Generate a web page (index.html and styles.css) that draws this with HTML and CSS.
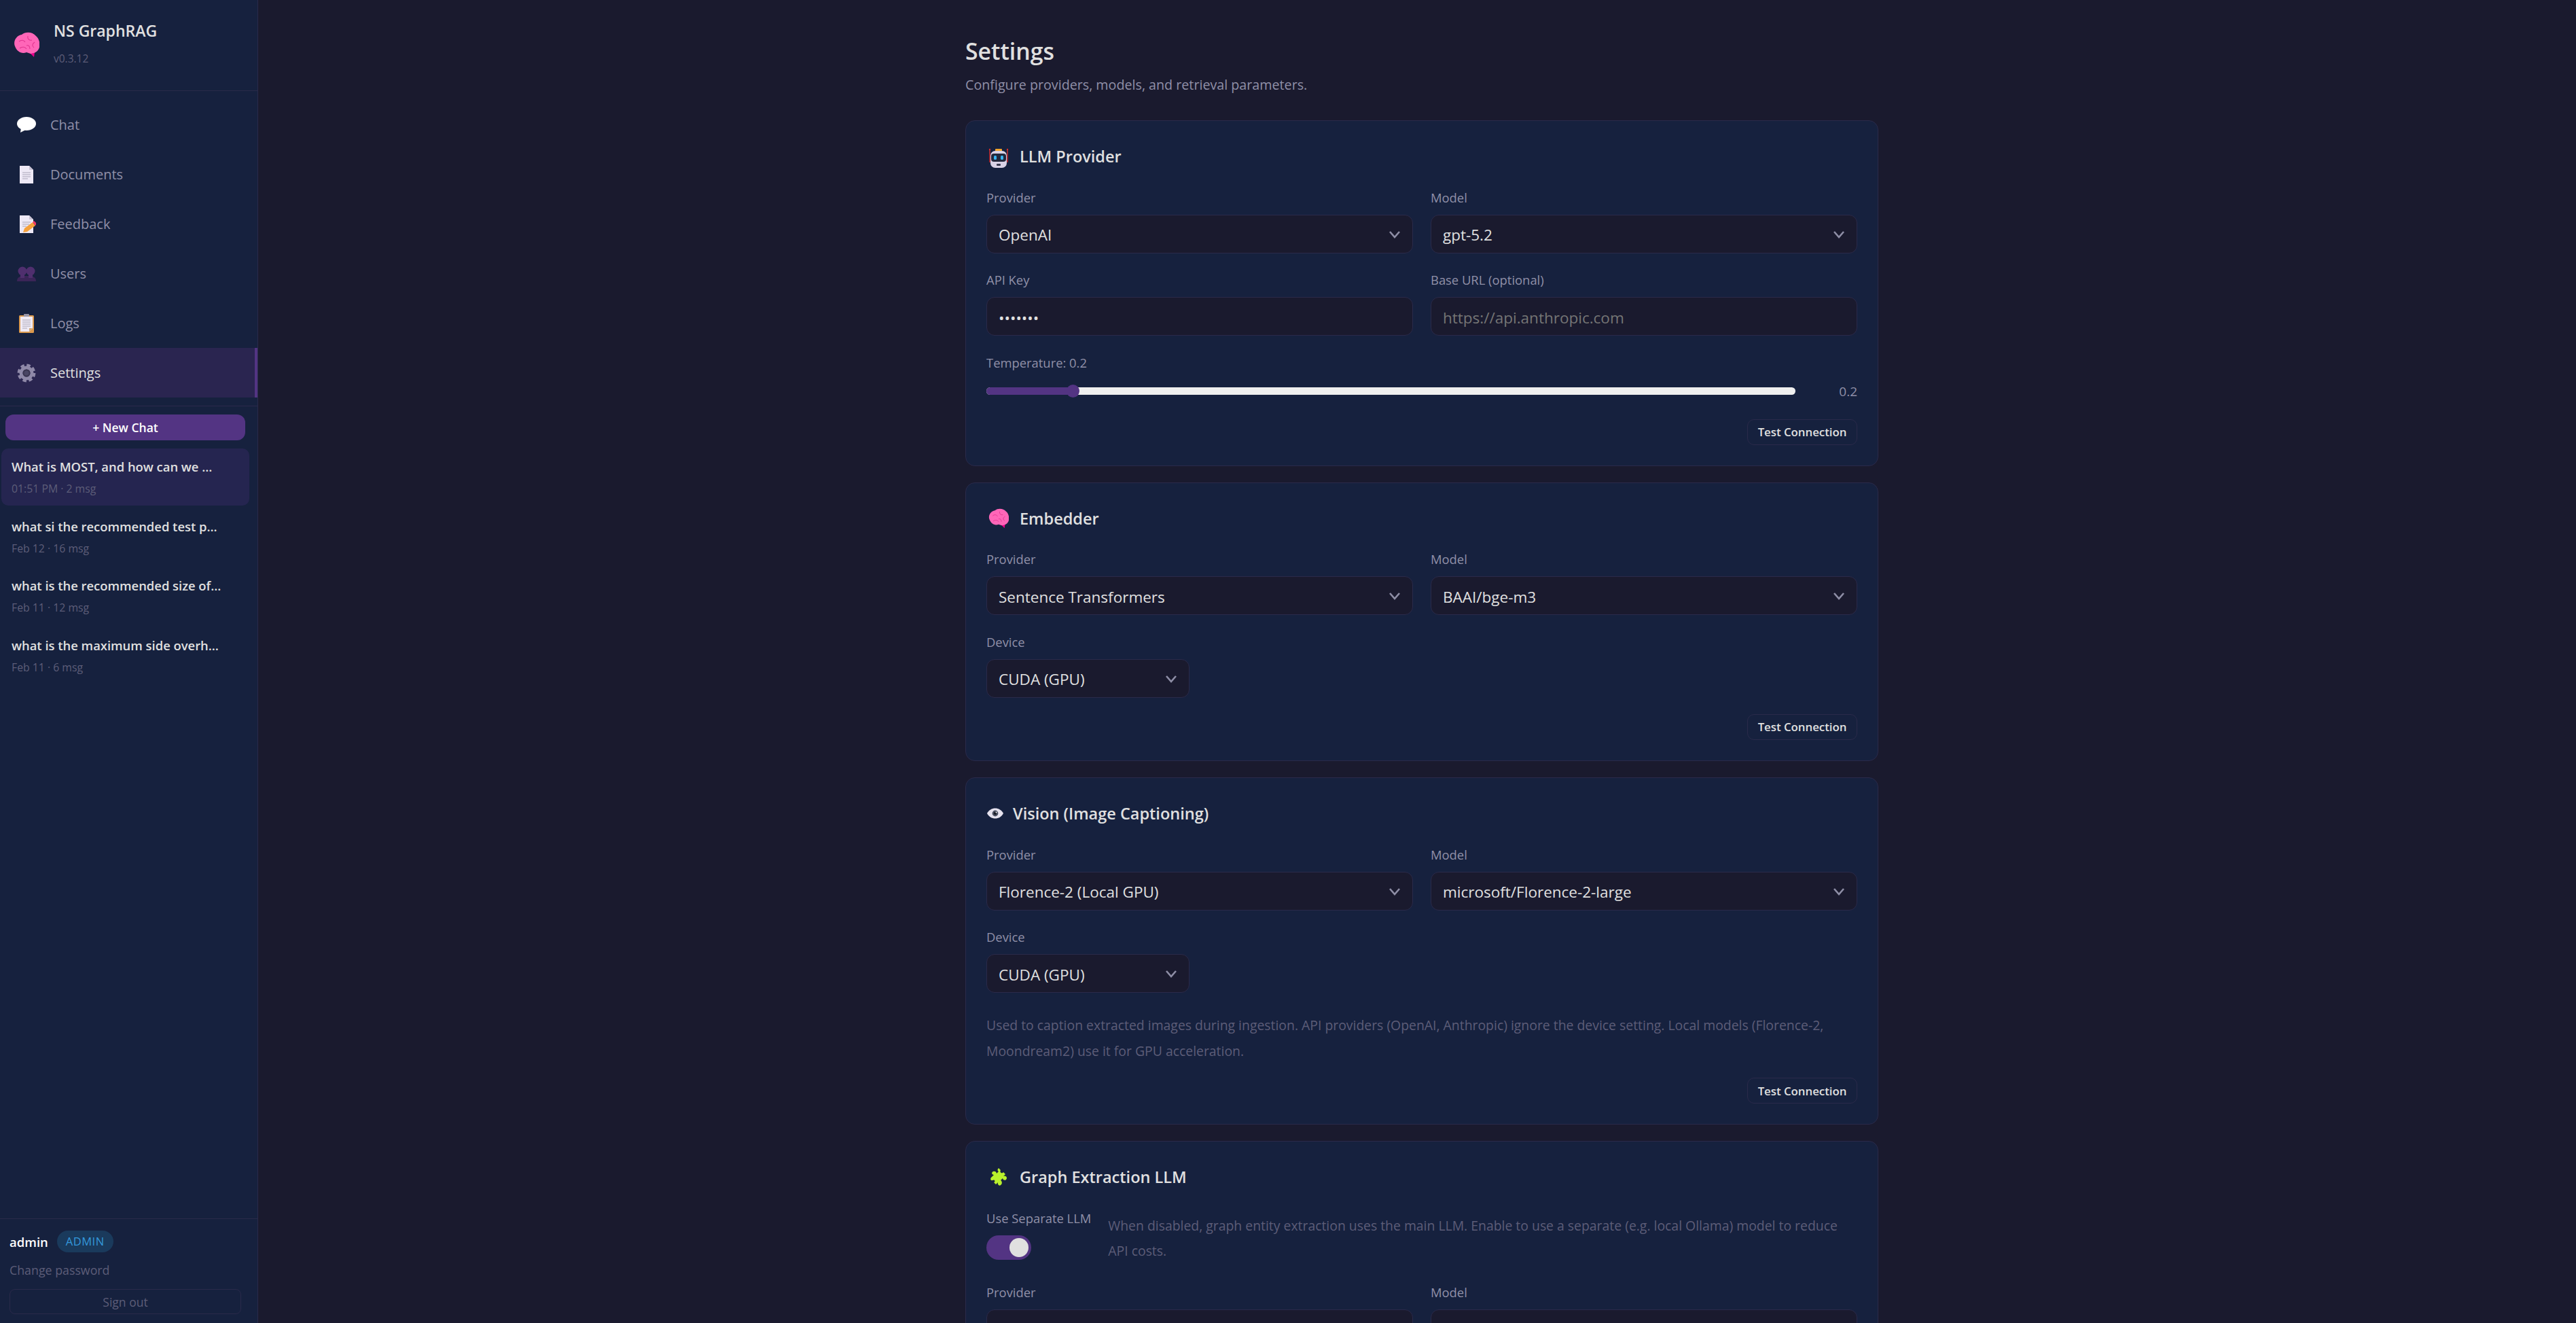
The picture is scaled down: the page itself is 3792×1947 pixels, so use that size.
FILE: index.html
```html
<!DOCTYPE html>
<html lang="en">

<head>
  <meta charset="UTF-8" />
  <meta name="viewport" content="width=device-width, initial-scale=1.0" />
  <title>NS GraphRAG - Settings</title>
  <link rel="stylesheet" href="styles.css">
</head>

<body>
  <svg class="defs" width="0" height="0">
    <symbol id="brain" viewBox="0 0 38 38">
      <path d="M23 30 L31 30 L30 37z" fill="#e8008a" />
      <path d="M2 21 C-1 14 4 5 12 4 C18 -1 28 0 33 6 C38 10 40 19 37 25 C34 31 29 31 25 32 L19 30 C12 33 5 29 2 21z" fill="#ff66b8" />
      <path d="M8 14 C12 11 15 12 17 15 M21 6 C20 10 23 13 27 12 M31 15 C27 18 27 21 30 23 M9 24 C13 21 17 22 19 25 M19 20 C22 19 24 21 24 25" fill="none" stroke="#e0348f" stroke-width="1.1" />
    </symbol>
  </svg>

  <div class="app">
    <aside class="sidebar">
      <div class="brand">
        <svg class="brand-logo"><use href="#brain" /></svg>
        <div>
          <div class="brand-name">NS GraphRAG</div>
          <div class="brand-version">v0.3.12</div>
        </div>
      </div>

      <nav class="nav">
        <a class="nav-item">
          <svg class="nav-icon" viewBox="0 0 28 28">
            <ellipse cx="14" cy="12" rx="14" ry="10" fill="#fff" />
            <path d="M6 18 L5 25 L13 21z" fill="#fff" />
          </svg>
          Chat
        </a>
        <a class="nav-item">
          <svg class="nav-icon" viewBox="0 0 28 28">
            <path d="M4 1 H18 L24 7 V27 H4z" fill="#eee9f6" />
            <path d="M18 1 L24 7 H18z" fill="#c9c4d6" />
            <path d="M8 11 H20 M8 14 H20 M8 17 H20 M8 20 H16" stroke="#a9a5b8" stroke-width="1.2" />
          </svg>
          Documents
        </a>
        <a class="nav-item">
          <svg class="nav-icon" viewBox="0 0 28 28">
            <path d="M4 1 H18 L24 7 V27 H4z" fill="#eee9f6" />
            <path d="M18 1 L24 7 H18z" fill="#c9c4d6" />
            <path d="M8 11 H20 M8 14 H18 M8 17 H14" stroke="#a9a5b8" stroke-width="1.2" />
            <path d="M9 26 L11 20 L23 11 L27 16 L15 25z" fill="#f6a13c" />
            <path d="M23 11 L25 9 L29 13 L27 16z" fill="#f03a68" />
          </svg>
          Feedback
        </a>
        <a class="nav-item">
          <svg class="nav-icon" viewBox="0 0 28 28">
            <path d="M0 25 C0 18 5 17 14 17 C23 17 28 18 28 25z" fill="#3b2558" />
            <circle cx="8" cy="10" r="6.5" fill="#4f2f6e" />
            <circle cx="20" cy="10" r="6.5" fill="#4f2f6e" />
            <path d="M5 15 H11 V20 H5z M17 15 H23 V20 H17z" fill="#4f2f6e" />
          </svg>
          Users
        </a>
        <a class="nav-item">
          <svg class="nav-icon" viewBox="0 0 28 28">
            <rect x="3" y="2" width="22" height="26" rx="1.5" fill="#dc9a4e" />
            <path d="M5 4 H23 V21 L18 26 H5z" fill="#efeaf5" />
            <path d="M18 26 V21 H23z" fill="#cfa878" />
            <rect x="10" y="0" width="8" height="4" rx="1" fill="#9a96a6" />
            <path d="M8 9 H20 M8 12 H20 M8 15 H20 M8 18 H20 M8 21 H15" stroke="#a9a5b8" stroke-width="1.2" />
          </svg>
          Logs
        </a>
        <a class="nav-item active">
          <svg class="nav-icon" viewBox="0 0 28 28">
            <circle cx="14" cy="14" r="11.4" fill="none" stroke="#8f89a8" stroke-width="4" stroke-dasharray="5.4 3.55" />
            <circle cx="14" cy="14" r="8" fill="none" stroke="#8f89a8" stroke-width="5" />
            <circle cx="14" cy="14" r="5.5" fill="#3a3550" />
            <circle cx="14" cy="14" r="3.6" fill="#4a4664" />
          </svg>
          Settings
        </a>
      </nav>

      <div class="chats">
        <button class="new-chat">+ New Chat</button>
        <ul class="chat-list">
          <li class="chat-item active">
            <div class="chat-title">What is MOST, and how can we ...</div>
            <div class="chat-meta">01:51 PM · 2 msg</div>
          </li>
          <li class="chat-item">
            <div class="chat-title">what si the recommended test p...</div>
            <div class="chat-meta">Feb 12 · 16 msg</div>
          </li>
          <li class="chat-item">
            <div class="chat-title">what is the recommended size of...</div>
            <div class="chat-meta">Feb 11 · 12 msg</div>
          </li>
          <li class="chat-item">
            <div class="chat-title">what is the maximum side overh...</div>
            <div class="chat-meta">Feb 11 · 6 msg</div>
          </li>
        </ul>
      </div>

      <div class="account">
        <div class="account-user">
          <span class="account-name">admin</span>
          <span class="badge">ADMIN</span>
        </div>
        <a class="change-password">Change password</a>
        <button class="sign-out">Sign out</button>
      </div>
    </aside>

    <main class="main">
      <div class="page">
        <h1 class="page-title">Settings</h1>
        <p class="page-sub">Configure providers, models, and retrieval parameters.</p>

        <section class="card">
          <h2 class="card-title">
            <svg class="card-icon" viewBox="0 0 36 36">
              <path d="M5 9 V27 M31 9 V27" stroke="#d8302f" stroke-width="1.4" />
              <circle cx="5" cy="8" r="1.2" fill="#d8302f" />
              <circle cx="31" cy="8" r="1.2" fill="#d8302f" />
              <rect x="13" y="7" width="10" height="5" rx="1" fill="#f2a52e" />
              <rect x="6" y="10" width="24" height="25" rx="7" fill="#d9d2e6" />
              <rect x="7" y="14" width="22" height="12" rx="4" fill="#23283c" />
              <rect x="11" y="17" width="4" height="6" rx="1.5" fill="#3ab4f2" />
              <rect x="21" y="17" width="4" height="6" rx="1.5" fill="#3ab4f2" />
              <rect x="15" y="29" width="6" height="3" rx="1" fill="#3a3a50" />
            </svg>
            LLM Provider
          </h2>
          <div class="form-grid">
            <div class="field">
              <label class="field-label">Provider</label>
              <div class="select-wrap">
                <select class="control"><option>OpenAI</option></select>
                <svg class="chevron" viewBox="0 0 18 12"><path d="M2 2 L9 10 L16 2" /></svg>
              </div>
            </div>
            <div class="field">
              <label class="field-label">Model</label>
              <div class="select-wrap">
                <select class="control"><option>gpt-5.2</option></select>
                <svg class="chevron" viewBox="0 0 18 12"><path d="M2 2 L9 10 L16 2" /></svg>
              </div>
            </div>
            <div class="field">
              <label class="field-label">API Key</label>
              <input class="control" type="password" value="sk-test" />
            </div>
            <div class="field">
              <label class="field-label">Base URL (optional)</label>
              <input class="control" type="text" placeholder="https://api.anthropic.com" />
            </div>
          </div>
          <div class="field">
            <label class="field-label">Temperature: 0.2</label>
            <div class="slider-row">
              <div class="slider">
                <div class="slider-fill" style="width: 127px"></div>
                <div class="slider-thumb" style="left: 127px"></div>
              </div>
              <span class="slider-value">0.2</span>
            </div>
          </div>
          <div class="actions"><button class="test-btn">Test Connection</button></div>
        </section>

        <section class="card">
          <h2 class="card-title">
            <svg class="card-icon brain"><use href="#brain" /></svg>
            Embedder
          </h2>
          <div class="form-grid">
            <div class="field">
              <label class="field-label">Provider</label>
              <div class="select-wrap">
                <select class="control"><option>Sentence Transformers</option></select>
                <svg class="chevron" viewBox="0 0 18 12"><path d="M2 2 L9 10 L16 2" /></svg>
              </div>
            </div>
            <div class="field">
              <label class="field-label">Model</label>
              <div class="select-wrap">
                <select class="control"><option>BAAI/bge-m3</option></select>
                <svg class="chevron" viewBox="0 0 18 12"><path d="M2 2 L9 10 L16 2" /></svg>
              </div>
            </div>
          </div>
          <div class="field device">
            <label class="field-label">Device</label>
            <div class="select-wrap">
              <select class="control"><option>CUDA (GPU)</option></select>
              <svg class="chevron" viewBox="0 0 18 12"><path d="M2 2 L9 10 L16 2" /></svg>
            </div>
          </div>
          <div class="actions"><button class="test-btn">Test Connection</button></div>
        </section>

        <section class="card">
          <h2 class="card-title">
            <svg class="card-icon eye" viewBox="0 0 26 36">
              <path d="M1 18 C6 8 20 8 25 18 C20 28 6 28 1 18z" fill="#e6e2ee" />
              <circle cx="13" cy="18" r="4.4" fill="#4a4f60" />
              <circle cx="13" cy="18" r="2" fill="#14161f" />
              <circle cx="14.5" cy="16.5" r="1" fill="#fff" />
            </svg>
            Vision (Image Captioning)
          </h2>
          <div class="form-grid">
            <div class="field">
              <label class="field-label">Provider</label>
              <div class="select-wrap">
                <select class="control"><option>Florence-2 (Local GPU)</option></select>
                <svg class="chevron" viewBox="0 0 18 12"><path d="M2 2 L9 10 L16 2" /></svg>
              </div>
            </div>
            <div class="field">
              <label class="field-label">Model</label>
              <div class="select-wrap">
                <select class="control"><option>microsoft/Florence-2-large</option></select>
                <svg class="chevron" viewBox="0 0 18 12"><path d="M2 2 L9 10 L16 2" /></svg>
              </div>
            </div>
          </div>
          <div class="field device">
            <label class="field-label">Device</label>
            <div class="select-wrap">
              <select class="control"><option>CUDA (GPU)</option></select>
              <svg class="chevron" viewBox="0 0 18 12"><path d="M2 2 L9 10 L16 2" /></svg>
            </div>
          </div>
          <p class="hint hint-block">Used to caption extracted images during ingestion. API providers (OpenAI, Anthropic) ignore the device setting. Local models (Florence-2, Moondream2) use it for GPU acceleration.</p>
          <div class="actions"><button class="test-btn">Test Connection</button></div>
        </section>

        <section class="card">
          <h2 class="card-title">
            <svg class="card-icon" viewBox="0 0 36 36">
              <path d="M18 5 L21 8 C19 11 23 14 25 11 L28 14 L25 17 C28 15 32 19 29 22 C27 24 24 22 24 20 L21 23 C23 24 24 28 21 30 C19 32 16 29 17 26 L14 29 L11 26 C14 25 12 21 9 23 C6 24 5 20 8 18 L11 15 C8 15 7 11 10 10 C12 9 15 10 15 13 L18 10 C16 9 16 7 18 5z" fill="#b9f02c" />
            </svg>
            Graph Extraction LLM
          </h2>
          <div class="switch-row">
            <div class="switch-col">
              <label class="field-label">Use Separate LLM</label>
              <div class="switch"><div class="switch-knob"></div></div>
            </div>
            <p class="hint">When disabled, graph entity extraction uses the main LLM. Enable to use a separate (e.g. local Ollama) model to reduce API costs.</p>
          </div>
          <div class="form-grid">
            <div class="field">
              <label class="field-label">Provider</label>
              <div class="select-wrap">
                <select class="control"><option>Ollama</option></select>
              </div>
            </div>
            <div class="field">
              <label class="field-label">Model</label>
              <div class="select-wrap">
                <select class="control"><option>llama3</option></select>
              </div>
            </div>
          </div>
        </section>
      </div>
    </main>
  </div>
</body>

</html>
```

FILE: styles.css
```css
* {
  box-sizing: border-box;
}

html,
body {
  height: 100%;
  margin: 0;
}

body {
  background-color: #1a1a2e;
  color: #e0e0e0;
  font-family: "Open Sans", "Noto Sans", sans-serif;
  overflow: hidden;
}

.defs {
  position: absolute;
}

.app {
  display: flex;
  height: 100%;
}

/* sidebar */
.sidebar {
  width: 380px;
  flex-shrink: 0;
  display: flex;
  flex-direction: column;
  background-color: #16213e;
  border-right: 1px solid #2a2a4a;
}

.brand {
  height: 134px;
  display: flex;
  align-items: center;
  gap: 21px;
  padding-left: 20px;
  border-bottom: 1px solid #2a2a4a;
}

.brand-logo {
  width: 38px;
  height: 38px;
  margin-top: -2px;
}

.brand-name {
  font-size: 23px;
  font-weight: 600;
  line-height: 28px;
  margin-top: -6px;
}

.brand-version {
  font-size: 15.5px;
  line-height: 22px;
  margin-top: 16px;
  color: #5d5d78;
}

.nav {
  padding: 13px 0 12px;
  border-bottom: 1px solid #2a2a4a;
}

.nav-item {
  height: 73px;
  display: flex;
  align-items: center;
  gap: 21px;
  padding-left: 25px;
  font-size: 20px;
  color: #9090a8;
}

.nav-item.active {
  background-color: #2a2550;
  border-right: 4px solid #533483;
  color: #e0e0e0;
}

.nav-icon {
  width: 28px;
  height: 28px;
  flex-shrink: 0;
}

.chats {
  padding: 12px 0 0;
}

.new-chat {
  display: block;
  width: 353px;
  height: 38px;
  margin-left: 8px;
  border: 0;
  border-radius: 12px;
  background-color: #533483;
  color: #fff;
  font-family: inherit;
  font-size: 17.5px;
  font-weight: 600;
}

.chat-list {
  list-style: none;
  margin: 12px 0 0 2px;
  padding: 0;
  width: 365px;
}

.chat-item {
  height: 84px;
  margin-bottom: 3.5px;
  padding: 12px 15px 0;
  border-radius: 10px;
}

.chat-item.active {
  background-color: #252550;
}

.chat-title {
  font-size: 18.4px;
  font-weight: 600;
  line-height: 30px;
  white-space: nowrap;
}

.chat-meta {
  font-size: 15.8px;
  line-height: 22px;
  margin-top: 6px;
  color: #5d5d78;
}

.account {
  margin-top: auto;
  height: 154px;
  padding: 17px 14px 0;
  border-top: 1px solid #2a2a4a;
}

.account-user {
  display: flex;
  align-items: center;
  gap: 13px;
  height: 32px;
}

.account-name {
  font-size: 18.5px;
  font-weight: 600;
  color: #fff;
}

.badge {
  height: 32px;
  line-height: 32px;
  padding: 0 13px;
  border-radius: 16px;
  background-color: #1a3a5c;
  color: #3498db;
  font-size: 16.5px;
  letter-spacing: 0.5px;
}

.change-password {
  display: block;
  margin-top: 12px;
  font-size: 17.8px;
  line-height: 28px;
  color: #5d5d78;
}

.sign-out {
  display: block;
  width: 341px;
  height: 37px;
  margin-top: 14px;
  background: none;
  border: 1px solid #2a2a4a;
  border-radius: 8px;
  color: #5d5d78;
  font-family: inherit;
  font-size: 17.5px;
}

/* main */
.main {
  flex: 1;
  height: 100%;
  overflow: hidden;
  padding-left: 14px;
}

.page {
  width: 1344px;
  margin: 0 auto;
  padding-top: 52px;
}

.page-title {
  margin: 0;
  font-size: 33.8px;
  font-weight: 600;
  line-height: 46px;
}

.page-sub {
  margin: 13px 0 0;
  font-size: 19.7px;
  line-height: 28px;
  color: #9090a8;
}

.card {
  margin-top: 24px;
  padding: 30px;
  background-color: #16213e;
  border: 1px solid #2a2a4a;
  border-radius: 14px;
}

.page-sub + .card {
  margin-top: 38px;
}

.card-title {
  display: flex;
  align-items: center;
  gap: 13px;
  height: 47.6px;
  padding-bottom: 4px;
  margin: 0 0 24px;
  font-size: 23.5px;
  font-weight: 600;
}

.card-icon {
  width: 36px;
  height: 36px;
  flex-shrink: 0;
}

.card-icon.eye {
  width: 26px;
}

.card-icon.brain {
  width: 30px;
  height: 30px;
  margin: 0 3px;
}

.form-grid {
  display: grid;
  grid-template-columns: 1fr 1fr;
  gap: 28.6px 26px;
}

.field-label {
  display: block;
  height: 24px;
  margin-bottom: 12px;
  font-size: 18.4px;
  font-weight: 500;
  line-height: 22px;
  color: #9090a8;
}

.form-grid + .field {
  margin-top: 28.6px;
}

.control {
  display: block;
  width: 100%;
  height: 57px;
  padding: 3px 17px 0;
  background-color: #1a1a2e;
  border: 1px solid #2a2a4a;
  border-radius: 12px;
  color: #e0e0e0;
  font-family: inherit;
  font-size: 22.5px;
  appearance: none;
  outline: none;
}

.select-wrap {
  position: relative;
}

.chevron {
  position: absolute;
  right: 18px;
  top: 23px;
  width: 18px;
  height: 12px;
  fill: none;
  stroke: #8e8ea6;
  stroke-width: 2.6;
}

.device {
  width: 299px;
}

.slider-row {
  display: flex;
  align-items: center;
  gap: 26px;
  height: 34px;
}

.slider {
  position: relative;
  flex: 1;
  height: 11px;
  border-radius: 6px;
  background-color: #efefef;
}

.slider-fill {
  height: 100%;
  border-radius: 6px 0 0 6px;
  background-color: #533483;
}

.slider-thumb {
  position: absolute;
  top: -4px;
  width: 19px;
  height: 19px;
  margin-left: -9px;
  border-radius: 50%;
  background-color: #533483;
}

.slider-value {
  width: 65px;
  text-align: right;
  font-size: 19px;
  color: #9090a8;
}

.actions {
  display: flex;
  justify-content: flex-end;
  margin-top: 24px;
}

.hint + .actions {
  margin-top: 21px;
}

.test-btn {
  width: 162px;
  height: 38px;
  padding: 0;
  background: none;
  border: 1px solid #2a2a4a;
  border-radius: 10px;
  color: #e0e0e0;
  font-family: inherit;
  font-size: 16.8px;
  font-weight: 600;
}

.hint {
  margin: 0;
  font-size: 19.4px;
  line-height: 37.5px;
  color: #5d5d78;
}

.hint-block {
  margin-top: 29px;
}

.switch-row {
  display: flex;
  align-items: flex-start;
  gap: 25px;
  margin-bottom: 31px;
}

.switch-row .hint {
  margin-top: 3px;
}

.switch-col {
  flex-shrink: 0;
}

.switch {
  position: relative;
  width: 66px;
  height: 36px;
  border-radius: 18px;
  background-color: #533483;
}

.switch-knob {
  position: absolute;
  top: 4px;
  right: 4px;
  width: 28px;
  height: 28px;
  border-radius: 50%;
  background-color: #e0e0e0;
}
```
